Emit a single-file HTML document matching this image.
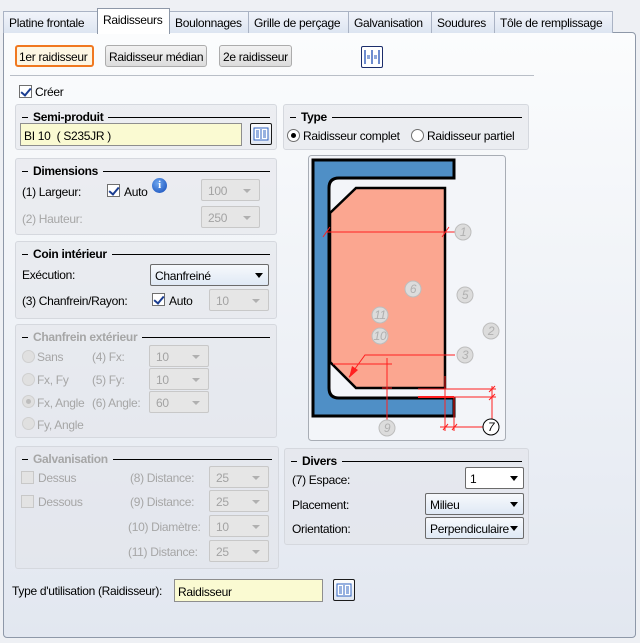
<!DOCTYPE html>
<html><head><meta charset="utf-8">
<style>
*{box-sizing:border-box;margin:0;padding:0}
body{width:640px;height:643px;overflow:hidden;background:#eef0f4;font-family:"Liberation Sans",sans-serif;font-size:12px;letter-spacing:-0.3px;color:#000;position:relative}
.a{position:absolute}
.tab{position:absolute;top:11px;height:22px;border:1px solid #aab3c4;border-bottom:none;background:linear-gradient(#f1f4fa,#dde5f1);padding:4px 5px;white-space:nowrap;font-size:12px;overflow:hidden}
.panel{position:absolute;left:3px;top:32px;width:633px;height:606px;border:1px solid #8e98a8;border-radius:0 4px 4px 4px;background:linear-gradient(#fbfcfd,#e2e7f0)}
.btn{position:absolute;height:22px;border:1px solid #acacac;border-radius:3px;background:linear-gradient(#f2f2f2,#dcdcdc);padding:4px 3px;font-size:12px;white-space:nowrap;overflow:hidden}
.grp{position:absolute;border:1px solid #d5d8de;border-radius:3px;background:rgba(225,228,233,.55)}
.gt{position:absolute;left:6px;right:6px;top:5px;height:14px;font-weight:bold;font-size:12px;white-space:nowrap;display:flex;align-items:center}
.gt:before{content:"";width:6px;border-top:1px solid #000;margin-right:5px}
.gt:after{content:"";flex:1;border-top:1px solid #000;margin-left:5px}
.dis{color:#a6a6a6}
.l{position:absolute;white-space:nowrap;font-size:12px}
.cb{position:absolute;width:13px;height:13px;border:1px solid #6f6f6f;background:#fff}
.cb.k:after{content:"";position:absolute;left:3px;top:0px;width:4px;height:8px;border:solid #1a3d91;border-width:0 2px 2px 0;transform:rotate(40deg)}
.cb.d{border-color:#c8c8c8;background:#e3e3e3}
.rd{position:absolute;width:13px;height:13px;border:1px solid #6f6f6f;border-radius:50%;background:#fff}
.rd.d{border-color:#cfcfcf;background:#e0e0e0}
.cmb{position:absolute;height:22px;border:1px solid #c8c8c8;border-radius:2px;background:#e6e6e6;color:#a3a3a3;padding:4px 6px;font-size:12px}
.cmb:after{content:"";position:absolute;right:8px;top:9px;border:4px solid transparent;border-top:4px solid #b0b0b0}
.cmbe{position:absolute;height:22px;border:1px solid #6b6b6b;border-radius:2px;background:linear-gradient(#f7f9fc,#dfe9f5);padding:4px 4px;font-size:12px;overflow:hidden;white-space:nowrap}
.cmbe:after{content:"";position:absolute;right:5px;top:8px;border:4.5px solid transparent;border-top:5px solid #000}
.inp{position:absolute;height:23px;border:1px solid #8e8e8e;background:#fafad2;padding:5px 3px;font-size:12px}
.ib{position:absolute;width:22px;height:22px;border:1px solid #1b1b1b;border-radius:2px;background:linear-gradient(#fdfdfd,#dfe6f2)}
</style></head><body>
<div class="panel"></div>
<div class="tab" style="left:3px;width:95px">Platine frontale</div>
<div class="tab" style="left:169px;width:80px">Boulonnages</div>
<div class="tab" style="left:248px;width:101px">Grille de perçage</div>
<div class="tab" style="left:348px;width:84px">Galvanisation</div>
<div class="tab" style="left:431px;width:64px">Soudures</div>
<div class="tab" style="left:494px;width:119px">Tôle de remplissage</div>
<div class="tab" style="left:97px;top:8px;height:26px;width:73px;background:#fff;border-color:#8e98a8">Raidisseurs</div>

<div class="btn" style="left:15px;top:45px;width:79px;border:2px solid #f07820;background:#fdf6e3;padding:3px 2px">1er raidisseur</div>
<div class="btn" style="left:105px;top:45px;width:102px">Raidisseur médian</div>
<div class="btn" style="left:219px;top:45px;width:73px">2e raidisseur</div>
<div class="ib" style="left:361px;top:46px;border-color:#1b2d6b;background:#fff">
<svg width="20" height="20" style="position:absolute;left:0;top:0"><g stroke="#1f4fb5" stroke-width="1.3" fill="none"><path d="M3 3V17M10 3V17M17 3V17"/><path d="M5 9H8M5 11H8M12 9H15M12 11H15" stroke-width="1"/></g></svg></div>
<div class="a" style="left:10px;top:75px;width:524px;border-top:1px solid #b9bec7"></div>

<div class="cb k" style="left:19px;top:85px"></div><div class="l" style="left:35px;top:85px">Créer</div>

<div class="grp" style="left:15px;top:104px;width:262px;height:46px"><div class="gt">Semi-produit</div></div>
<div class="inp" style="left:20px;top:123px;width:222px">BI 10&nbsp; ( S235JR )</div>
<div class="ib" style="left:250px;top:123px"><svg width="20" height="20"><rect x="3" y="4" width="14" height="12" fill="#fff" stroke="#2f63c0"/><path d="M5 7h3M5 9h3M5 11h3M5 13h3M12 7h3M12 9h3M12 11h3M12 13h3M10 5v10" stroke="#2f63c0"/></svg></div>

<div class="grp" style="left:283px;top:104px;width:246px;height:46px"><div class="gt">Type</div></div>
<div class="rd" style="left:287px;top:129px"><div class="a" style="left:3px;top:3px;width:5px;height:5px;border-radius:50%;background:#000"></div></div>
<div class="l" style="left:303px;top:129px">Raidisseur complet</div>
<div class="rd" style="left:411px;top:129px"></div>
<div class="l" style="left:427px;top:129px">Raidisseur partiel</div>

<div class="grp" style="left:15px;top:158px;width:262px;height:77px"><div class="gt">Dimensions</div></div>
<div class="l" style="left:22px;top:185px">(1) Largeur:</div>
<div class="cb k" style="left:107px;top:184px"></div><div class="l" style="left:124px;top:185px">Auto</div>
<div class="a" style="left:152px;top:178px;width:15px;height:15px;border-radius:50%;background:radial-gradient(circle at 40% 35%,#6fa7ef,#1049b8);color:#fff;font-weight:bold;font-size:11px;text-align:center;line-height:15px;font-family:'Liberation Serif',serif">i</div>
<div class="cmb" style="left:201px;top:179px;width:59px">100</div>
<div class="l dis" style="left:22px;top:212px">(2) Hauteur:</div>
<div class="cmb" style="left:201px;top:206px;width:59px">250</div>

<div class="grp" style="left:15px;top:241px;width:262px;height:78px"><div class="gt">Coin intérieur</div></div>
<div class="l" style="left:22px;top:268px">Exécution:</div>
<div class="cmbe" style="left:150px;top:264px;width:119px;padding-left:4px">Chanfreiné</div>
<div class="l" style="left:22px;top:294px">(3) Chanfrein/Rayon:</div>
<div class="cb k" style="left:152px;top:293px"></div><div class="l" style="left:169px;top:294px">Auto</div>
<div class="cmb" style="left:209px;top:289px;width:60px">10</div>

<div class="grp dis" style="left:15px;top:324px;width:262px;height:114px"><div class="gt">Chanfrein extérieur</div></div>
<div class="rd d" style="left:22px;top:350px"></div><div class="l dis" style="left:37px;top:350px">Sans</div>
<div class="l dis" style="left:92px;top:350px">(4) Fx:</div><div class="cmb" style="left:149px;top:345px;width:60px">10</div>
<div class="rd d" style="left:22px;top:373px"></div><div class="l dis" style="left:37px;top:373px">Fx, Fy</div>
<div class="l dis" style="left:92px;top:373px">(5) Fy:</div><div class="cmb" style="left:149px;top:368px;width:60px">10</div>
<div class="rd d" style="left:22px;top:395px"><div class="a" style="left:3px;top:3px;width:5px;height:5px;border-radius:50%;background:#bdbdbd"></div></div><div class="l dis" style="left:37px;top:396px">Fx, Angle</div>
<div class="l dis" style="left:92px;top:396px">(6) Angle:</div><div class="cmb" style="left:149px;top:391px;width:60px">60</div>
<div class="rd d" style="left:22px;top:417px"></div><div class="l dis" style="left:37px;top:418px">Fy, Angle</div>

<div class="grp dis" style="left:15px;top:446px;width:264px;height:123px"><div class="gt">Galvanisation</div></div>
<div class="cb d" style="left:21px;top:471px"></div><div class="l dis" style="left:38px;top:471px">Dessus</div>
<div class="l dis" style="left:130px;top:471px">(8) Distance:</div><div class="cmb" style="left:209px;top:466px;width:60px">25</div>
<div class="cb d" style="left:21px;top:495px"></div><div class="l dis" style="left:38px;top:495px">Dessous</div>
<div class="l dis" style="left:130px;top:495px">(9) Distance:</div><div class="cmb" style="left:209px;top:490px;width:60px">25</div>
<div class="l dis" style="left:128px;top:520px">(10) Diamètre:</div><div class="cmb" style="left:209px;top:515px;width:60px">10</div>
<div class="l dis" style="left:128px;top:545px">(11) Distance:</div><div class="cmb" style="left:209px;top:540px;width:60px">25</div>

<div class="grp" style="left:284px;top:448px;width:245px;height:97px"><div class="gt">Divers</div></div>
<div class="l" style="left:292px;top:473px">(7) Espace:</div>
<div class="cmbe" style="left:465px;top:467px;width:59px;background:#fff">1</div>
<div class="l" style="left:292px;top:498px">Placement:</div>
<div class="cmbe" style="left:425px;top:493px;width:99px">Milieu</div>
<div class="l" style="left:292px;top:522px">Orientation:</div>
<div class="cmbe" style="left:425px;top:517px;width:99px;padding-right:14px">Perpendiculaire</div>

<div class="l" style="left:12px;top:584px">Type d'utilisation (Raidisseur):</div>
<div class="inp" style="left:174px;top:579px;width:149px">Raidisseur</div>
<div class="ib" style="left:333px;top:579px"><svg width="20" height="20"><rect x="3" y="4" width="14" height="12" fill="#fff" stroke="#2f63c0"/><path d="M5 7h3M5 9h3M5 11h3M5 13h3M12 7h3M12 9h3M12 11h3M12 13h3M10 5v10" stroke="#2f63c0"/></svg></div>

<svg class="a" style="left:0;top:0" width="640" height="643">
<rect x="308.5" y="155.5" width="197" height="285" rx="3" fill="#f3f5f9" stroke="#a8adb5"/>
<path d="M313 160H454V178H339Q329 178 329 188V388Q329 398 339 398H454V416H313Z" fill="#4f8fc6" stroke="#000" stroke-width="3" stroke-linejoin="miter"/>
<path d="M356 188H445V388H356L330 362V213Z" fill="#fba690" stroke="#000" stroke-width="2.5"/>
<g stroke="#ff2020" stroke-width="1" fill="none">
<path d="M326 232H456M323 237L330 227M442 237L449 227"/>
<path d="M333 364H392M387 358V430M382 388H392"/>
<path d="M455 355H365L349 377"/>
<path d="M418 389H496M418 397H496M492 386V420M445 376V431M454 397V431M440 427H483M443 430L448 424M452 430L457 424M489 392L495 386M489 400L495 394"/>
</g>
<path d="M454 397H418" stroke="#ff2020" stroke-width="2"/>
<path d="M349 378L352 366L358 370Z" fill="#ff2020"/>
<g font-family="Liberation Sans,sans-serif" font-size="12" font-style="italic" text-anchor="middle" fill="#b0b0b0">
<g fill="#dcdcdc" stroke="#bdbdbd"><circle cx="463" cy="232" r="8"/><circle cx="413" cy="289" r="8"/><circle cx="465" cy="295" r="8"/><circle cx="380" cy="315" r="8"/><circle cx="380" cy="336" r="8"/><circle cx="491" cy="331" r="8"/><circle cx="465" cy="355" r="8"/><circle cx="387" cy="428" r="8"/></g>
<text x="463" y="236">1</text><text x="413" y="293">6</text><text x="465" y="299">5</text><text x="380" y="319">11</text><text x="380" y="340">10</text><text x="491" y="335">2</text><text x="465" y="359">3</text><text x="387" y="432">9</text>
<circle cx="491" cy="427" r="8" fill="#fff" stroke="#000"/><text x="491" y="431" fill="#000">7</text>
</g>
</svg>
</body></html>
